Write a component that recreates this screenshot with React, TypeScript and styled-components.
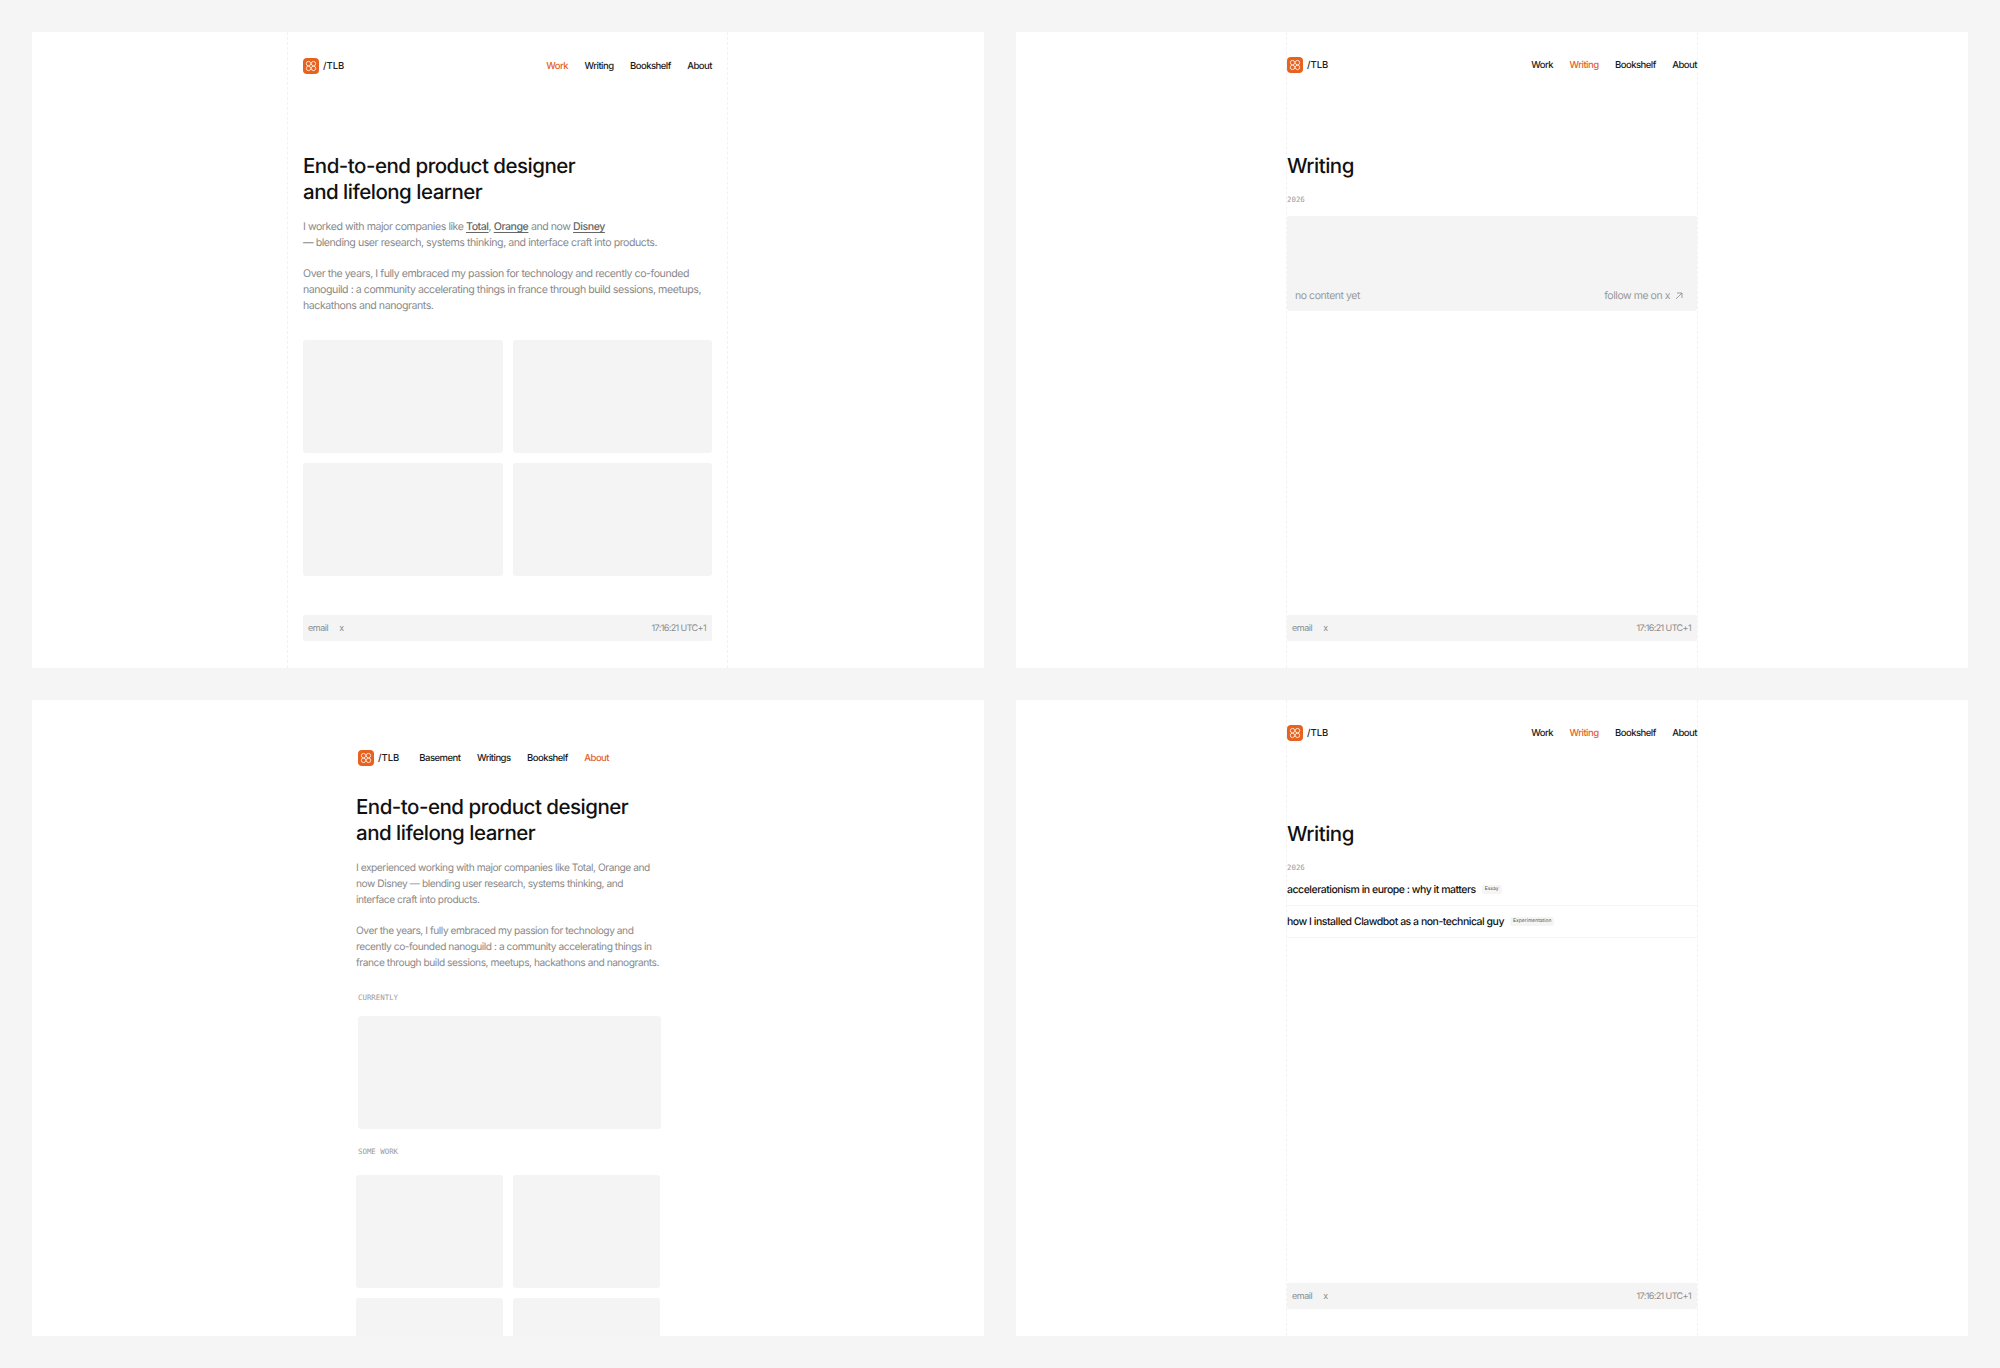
import React from 'react'
import styled, { createGlobalStyle } from 'styled-components'

const GlobalStyle = createGlobalStyle`
  html, body {
    margin: 0;
    background: #f5f5f5;
    text-rendering: geometricPrecision;
  }
  * {
    box-sizing: border-box;
  }
`

const Board = styled.div`
  width: 2000px;
  height: 1368px;
  padding: 32px;
  display: grid;
  grid-template-columns: 952px 952px;
  grid-template-rows: 636px 636px;
  gap: 32px;
  font-family: Inter, 'Liberation Sans', sans-serif;
`

const Panel = styled.section<{ $inset: number }>`
  background: #fff;
  overflow: hidden;
  padding-left: ${(p) => p.$inset}px;
`

const Column = styled.div<{ $width: number; $pad?: number }>`
  width: ${(p) => p.$width}px;
  height: 100%;
  display: flex;
  flex-direction: column;
  padding: 0 ${(p) => p.$pad || 0}px 27px;
  border-left: 1px dashed #f2f2f2;
  border-right: 1px dashed #f2f2f2;
`

const PlainColumn = styled.div`
  width: 305px;
  display: flex;
  flex-direction: column;
`

const Nav = styled.nav<{ $top: number }>`
  display: flex;
  align-items: center;
  justify-content: space-between;
  height: 16px;
  margin-top: ${(p) => p.$top}px;
`

const Brand = styled.div`
  display: flex;
  align-items: center;
  gap: 4px;
  font-size: 9.5px;
  font-weight: 500;
  letter-spacing: 0;
  color: #222;
`

const Links = styled.div`
  display: flex;
  gap: 16.5px;
`

const NavLink = styled.a<{ $active?: boolean }>`
  font-size: 9.5px;
  font-weight: 500;
  letter-spacing: -0.52px;
  color: ${(p) => (p.$active ? '#e2622a' : '#1a1a1a')};
`

const CompactNav = styled(Nav)`
  justify-content: flex-start;
  margin-left: 2px;
  ${Links} {
    margin-left: 20px;
  }
`

const Heading = styled.h1<{ $top: number }>`
  margin: ${(p) => p.$top}px 0 0;
  font-size: 20.5px;
  line-height: 25.5px;
  font-weight: 500;
  letter-spacing: -0.5px;
  color: #111;
`

const Copy = styled.div<{ $top: number; $size: number }>`
  margin-top: ${(p) => p.$top}px;
  display: flex;
  flex-direction: column;
  gap: 15px;
  font-size: ${(p) => p.$size}px;
  line-height: 16px;
  letter-spacing: -0.45px;
  white-space: nowrap;
  color: #8a8a8a;
  p {
    margin: 0;
  }
`

const Mention = styled.a`
  color: #666;
  font-weight: 500;
  text-decoration: underline;
  text-underline-offset: 2px;
`

const CardGrid = styled.div<{ $top: number }>`
  margin-top: ${(p) => p.$top}px;
  display: grid;
  grid-template-columns: 1fr 1fr;
  grid-auto-rows: 113px;
  gap: 10px;
`

const InsetGrid = styled(CardGrid)`
  margin-right: 1px;
`

const Card = styled.div`
  background: #f4f4f4;
  border-radius: 3px;
`

const Footer = styled.footer`
  margin-top: auto;
  height: 26px;
  flex: none;
  display: flex;
  align-items: center;
  padding: 0 6px 0 5px;
  gap: 11px;
  background: #f4f4f4;
  border-radius: 2px;
  font-size: 9px;
  letter-spacing: -0.45px;
  color: #8c8c8c;
`

const Clock = styled.span`
  margin-left: auto;
  letter-spacing: -0.6px;
`

const Label = styled.div<{ $top: number }>`
  margin: ${(p) => p.$top}px 0 0 2px;
  font-family: 'DejaVu Sans Mono', monospace;
  font-size: 7.4px;
  line-height: 10px;
  color: #9a9a9a;
`

const Year = styled(Label)`
  margin-left: 0;
`

const WideCard = styled(Card)`
  margin: 13px 0 0 2px;
  height: 113px;
`

const EmptyCard = styled(Card)`
  margin-top: 11.5px;
  height: 95px;
  display: flex;
  align-items: flex-end;
  justify-content: space-between;
  padding: 0 14px 8px 8px;
  font-size: 10.5px;
  line-height: 14px;
  letter-spacing: -0.45px;
  color: #999;
`

const FollowLink = styled.span`
  display: flex;
  align-items: center;
  gap: 5px;
`

const Posts = styled.div`
  margin-top: 1px;
`

const PostRow = styled.div`
  display: flex;
  align-items: center;
  gap: 6px;
  height: 32px;
  border-bottom: 1px solid #f5f5f5;
  font-size: 10.5px;
  font-weight: 500;
  letter-spacing: -0.48px;
  color: #111;
`

const Tag = styled.span`
  padding: 1px 3px;
  background: #f5f5f5;
  border-radius: 2px;
  font-size: 5px;
  line-height: 7px;
  font-weight: 400;
  letter-spacing: 0;
  color: #555;
`

const Logo = () => (
  <svg width="16" height="16" viewBox="0 0 16 16" fill="none">
    <rect width="16" height="16" rx="4" fill="#e8621f" />
    <g stroke="#fbe3d4" strokeWidth="1">
      <circle cx="5.5" cy="5.6" r="2.2" />
      <circle cx="10.5" cy="5.6" r="2.2" />
      <circle cx="5.5" cy="10.4" r="2.2" />
      <circle cx="10.5" cy="10.4" r="2.2" />
    </g>
  </svg>
)

const Arrow = () => (
  <svg width="8" height="8" viewBox="0 0 8 8" fill="none" stroke="#888" strokeWidth="0.8">
    <path d="M1 7L7 1M2 1h5v5" />
  </svg>
)

const Brandmark = () => (
  <Brand>
    <Logo />
    /TLB
  </Brand>
)

const links = ['Work', 'Writing', 'Bookshelf', 'About']

const SiteNav = ({ active, top }: { active: string; top: number }) => (
  <Nav $top={top}>
    <Brandmark />
    <Links>
      {links.map((link) => (
        <NavLink key={link} $active={link === active}>
          {link}
        </NavLink>
      ))}
    </Links>
  </Nav>
)

const SiteFooter = () => (
  <Footer>
    <span>email</span>
    <span>x</span>
    <Clock>17:16:21 UTC+1</Clock>
  </Footer>
)

export default function App() {
  return (
    <Board>
      <GlobalStyle />
      <Panel $inset={255}>
        <Column $width={441} $pad={15}>
          <SiteNav active="Work" top={26} />
          <Heading $top={79}>
            End-to-end product designer
            <br />
            and lifelong learner
          </Heading>
          <Copy $top={15} $size={10.6}>
            <p>
              I worked with major companies like <Mention>Total</Mention>, <Mention>Orange</Mention> and now{' '}
              <Mention>Disney</Mention>
              <br />— blending user research, systems thinking, and interface craft into products.
            </p>
            <p>
              Over the years, I fully embraced my passion for technology and recently co-founded
              <br />
              nanoguild : a community accelerating things in france through build sessions, meetups,
              <br />
              hackathons and nanogrants.
            </p>
          </Copy>
          <CardGrid $top={26}>
            <Card />
            <Card />
            <Card />
            <Card />
          </CardGrid>
          <SiteFooter />
        </Column>
      </Panel>

      <Panel $inset={270}>
        <Column $width={412}>
          <SiteNav active="Writing" top={25} />
          <Heading $top={80}>Writing</Heading>
          <Year $top={16}>2026</Year>
          <EmptyCard>
            <span>no content yet</span>
            <FollowLink>
              follow me on x <Arrow />
            </FollowLink>
          </EmptyCard>
          <SiteFooter />
        </Column>
      </Panel>

      <Panel $inset={324}>
        <PlainColumn>
          <CompactNav $top={50}>
            <Brandmark />
            <Links>
              <NavLink>Basement</NavLink>
              <NavLink>Writings</NavLink>
              <NavLink>Bookshelf</NavLink>
              <NavLink $active>About</NavLink>
            </Links>
          </CompactNav>
          <Heading $top={28}>
            End-to-end product designer
            <br />
            and lifelong learner
          </Heading>
          <Copy $top={15} $size={10.2}>
            <p>
              I experienced working with major companies like Total, Orange and
              <br />
              now Disney — blending user research, systems thinking, and
              <br />
              interface craft into products.
            </p>
            <p>
              Over the years, I fully embraced my passion for technology and
              <br />
              recently co-founded nanoguild : a community accelerating things in
              <br />
              france through build sessions, meetups, hackathons and nanogrants.
            </p>
          </Copy>
          <Label $top={22}>CURRENTLY</Label>
          <WideCard />
          <Label $top={18}>SOME WORK</Label>
          <InsetGrid $top={18}>
            <Card />
            <Card />
            <Card />
            <Card />
          </InsetGrid>
        </PlainColumn>
      </Panel>

      <Panel $inset={270}>
        <Column $width={412}>
          <SiteNav active="Writing" top={25} />
          <Heading $top={80}>Writing</Heading>
          <Year $top={16}>2026</Year>
          <Posts>
            <PostRow>
              accelerationism in europe : why it matters <Tag>Essay</Tag>
            </PostRow>
            <PostRow>
              how I installed Clawdbot as a non-technical guy <Tag>Experimentation</Tag>
            </PostRow>
          </Posts>
          <SiteFooter />
        </Column>
      </Panel>
    </Board>
  )
}
